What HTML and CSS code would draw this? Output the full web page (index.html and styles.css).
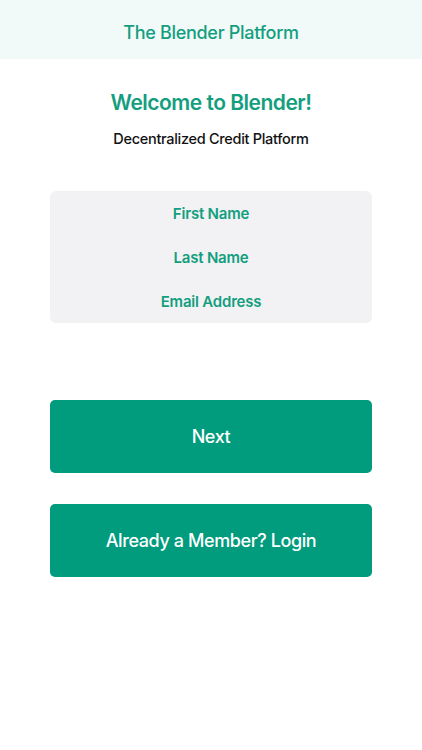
FILE: index.html
```html
<!DOCTYPE html>
<html lang="en">
<head>
    <meta charset="UTF-8">
    <meta name="viewport" content="width=device-width, initial-scale=1.0">
    <title>The Blender Platform</title>
    <link rel="stylesheet" href="styles.css">
</head>
<body>

    <header class="topbar">
        <h1 class="topbar-title">The Blender Platform</h1>
    </header>

    <main class="content">
        <h2 class="welcome">Welcome to Blender!</h2>
        <p class="tagline">Decentralized Credit Platform</p>

        <div class="fields">
            <input type="text" class="field" placeholder="First Name">
            <input type="text" class="field" placeholder="Last Name">
            <input type="email" class="field" placeholder="Email Address">
        </div>

        <div class="actions">
            <button class="btn">Next</button>
            <button class="btn">Already a Member? Login</button>
        </div>
    </main>

</body>
</html>
```

FILE: styles.css
```css
body {
    font-family: Inter, "Noto Sans", sans-serif;
    margin: 0;
    background-color: #fff;
}

.topbar {
    height: 59px;
    box-sizing: border-box;
    padding-top: 6px;
    background-color: #f1faf8;
    display: flex;
    align-items: center;
    justify-content: center;
}

.topbar-title {
    margin: 0;
    font-size: 18px;
    font-weight: 500;
    letter-spacing: -0.3px;
    color: #139e80;
}

.content {
    display: flex;
    flex-direction: column;
    align-items: center;
    padding: 30px 50px 0;
}

.welcome {
    margin: 0;
    font-size: 21px;
    line-height: 28px;
    font-weight: 600;
    letter-spacing: -0.5px;
    color: #139e80;
}

.tagline {
    margin: 12px 0 0;
    font-size: 14.5px;
    line-height: 20px;
    font-weight: 500;
    letter-spacing: -0.3px;
    color: #111;
}

.fields {
    margin-top: 42px;
    width: 100%;
    background-color: #f2f2f4;
    border-radius: 6px;
    display: flex;
    flex-direction: column;
}

.field {
    height: 44px;
    border: none;
    background: transparent;
    text-align: center;
    font-family: inherit;
    font-size: 15px;
    font-weight: 600;
    letter-spacing: -0.2px;
    color: #139e80;
    outline: none;
    padding: 0;
}

.field::placeholder {
    color: #139e80;
    opacity: 1;
}

.actions {
    margin-top: 77px;
    width: 100%;
    display: flex;
    flex-direction: column;
    gap: 31px;
}

.btn {
    height: 73px;
    border: none;
    border-radius: 5px;
    background-color: #019b7d;
    color: #fff;
    font-family: inherit;
    font-size: 18px;
    font-weight: 500;
    letter-spacing: -0.4px;
    cursor: pointer;
}
```
